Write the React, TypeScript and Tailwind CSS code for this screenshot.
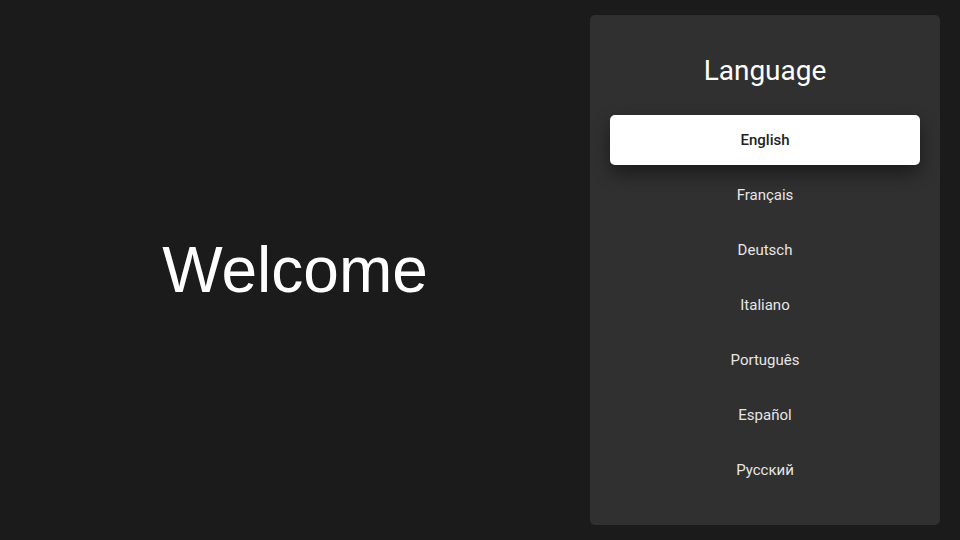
const languages = ['English', 'Français', 'Deutsch', 'Italiano', 'Português', 'Español', 'Русский'];

export default function App() {
  const selected = 'English';

  return (
    <div className="flex h-[540px] w-[960px] bg-[#1b1b1b]">
      <div className="flex flex-1 items-center justify-center">
        <h1 className="font-['Liberation_Sans',Arial,sans-serif] text-[64px] leading-none text-white">Welcome</h1>
      </div>

      <div className="my-[15px] mr-[20px] flex w-[350px] flex-col rounded-[5px] bg-[#303030] px-[20px] font-['Roboto',sans-serif]">
        <h2 className="mt-[42px] text-center text-[28px] font-normal leading-none text-white">Language</h2>
        <ul className="mt-[30px] flex flex-col gap-[5px]">
          {languages.map(lang => (
            <li
              key={lang}
              className={
                lang === selected
                  ? 'flex h-[50px] items-center justify-center rounded-[5px] bg-white pt-px text-[15px] font-medium text-[#222222] shadow-[0_8px_18px_rgba(0,0,0,0.45)]'
                  : 'flex h-[50px] items-center justify-center pt-px text-[15px] text-[#e6e6e6]'
              }
            >
              {lang}
            </li>
          ))}
        </ul>
      </div>
    </div>
  );
}
